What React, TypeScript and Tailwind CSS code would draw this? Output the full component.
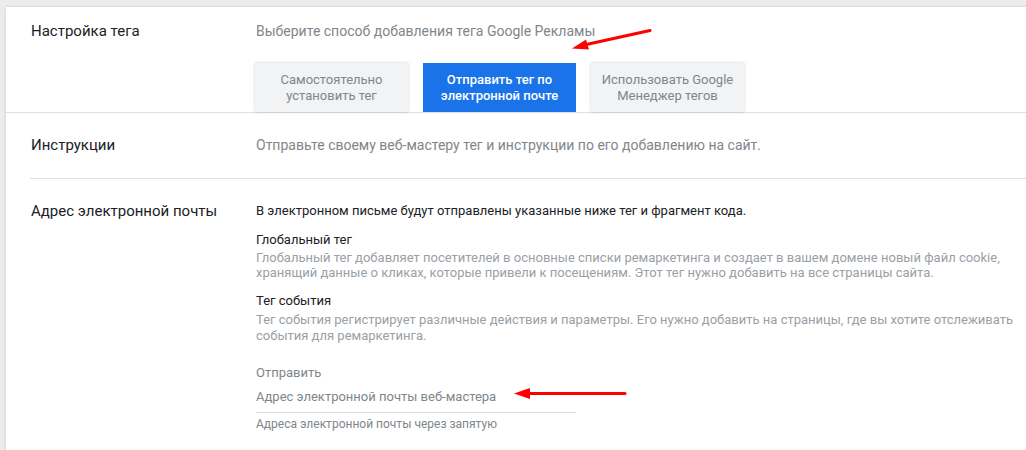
import React from "react";

export default function App() {
  const font = { fontFamily: "Roboto, 'Noto Sans', Arial, sans-serif" };
  return (
    <div className="relative w-[1026px] h-[450px] overflow-hidden bg-[#ececec] pt-[7px] pl-[6px]" style={font}>
      <div className="h-[443px] bg-white shadow-[0_0_3px_rgba(0,0,0,0.15)]">
        {/* Section 1 */}
        <div className="flex border-b border-[#e0e0e0] pt-[14px] pl-[25px]">
          <div className="w-[225px] text-[15px] leading-[20px] text-[#202124]">Настройка тега</div>
          <div className="flex flex-col">
            <div className="text-[14px] leading-[20px] text-[#80868b]">Выберите способ добавления тега Google Рекламы</div>
            <div className="mt-[22px] flex gap-[15px] -ml-[1px]">
              <div className="w-[153px] h-[49px] bg-[#f1f3f4] shadow-[0_0_3px_rgba(0,0,0,0.18)] flex items-center justify-center text-center text-[13px] leading-[16px] text-[#80868b]">
                Самостоятельно<br />установить тег
              </div>
              <div className="w-[153px] h-[49px] bg-[#1a73e8] flex items-center justify-center text-center text-[13px] leading-[16px] text-white font-medium">
                Отправить тег по<br />электронной почте
              </div>
              <div className="w-[153px] h-[49px] bg-[#f1f3f4] shadow-[0_0_3px_rgba(0,0,0,0.18)] flex items-center justify-center text-center text-[13px] leading-[16px] text-[#80868b]">
                Использовать Google<br />Менеджер тегов
              </div>
            </div>
          </div>
        </div>
        {/* Section 2 */}
        <div className="ml-[24px] flex border-b border-[#e0e0e0] pt-[22px] pb-[23px] pl-[1px]">
          <div className="w-[225px] text-[15px] leading-[20px] text-[#202124]">Инструкции</div>
          <div className="text-[14px] leading-[20px] text-[#80868b]">Отправьте своему веб-мастеру тег и инструкции по его добавлению на сайт.</div>
        </div>
        {/* Section 3 */}
        <div className="flex pt-[22px] pl-[25px]">
          <div className="w-[225px] text-[15px] leading-[20px] text-[#202124]">Адрес электронной почты</div>
          <div className="flex flex-col text-[13px]">
            <div className="leading-[20px] text-[#202124]">В электронном письме будут отправлены указанные ниже тег и фрагмент кода.</div>
            <div className="mt-[9px] leading-[20px] text-[#202124]">Глобальный тег</div>
            <div className="leading-[15px] text-[#9aa0a6]">
              Глобальный тег добавляет посетителей в основные списки ремаркетинга и создает в вашем домене новый файл cookie,<br />
              хранящий данные о кликах, которые привели к посещениям. Этот тег нужно добавить на все страницы сайта.
            </div>
            <div className="mt-[11px] leading-[20px] text-[#202124]">Тег события</div>
            <div className="mt-[1px] leading-[16px] text-[#9aa0a6]">
              Тег события регистрирует различные действия и параметры. Его нужно добавить на страницы, где вы хотите отслеживать<br />
              события для ремаркетинга.
            </div>
            <div className="mt-[19px] leading-[20px] text-[#80868b]">Отправить</div>
            <div className="mt-[4px] w-[320px] border-b border-[#dadce0] pb-[5px] leading-[20px] text-[#80868b]">
              Адрес электронной почты веб-мастера
            </div>
            <div className="mt-[3px] text-[12px] leading-[16px] text-[#80868b]">Адреса электронной почты через запятую</div>
          </div>
        </div>
      </div>
      {/* Red arrows overlay */}
      <svg className="absolute left-0 top-0" width="1026" height="450" viewBox="0 0 1026 450">
        <line x1="650" y1="30.5" x2="584" y2="45" stroke="#ff0000" strokeWidth="3" strokeLinecap="round" />
        <polygon points="572,48.5 586,39.5 589,49.5" fill="#ff0000" />
        <line x1="625" y1="393.5" x2="527" y2="393.5" stroke="#ff0000" strokeWidth="3" strokeLinecap="round" />
        <polygon points="514,393.5 530,388 530,399" fill="#ff0000" />
      </svg>
    </div>
  );
}
